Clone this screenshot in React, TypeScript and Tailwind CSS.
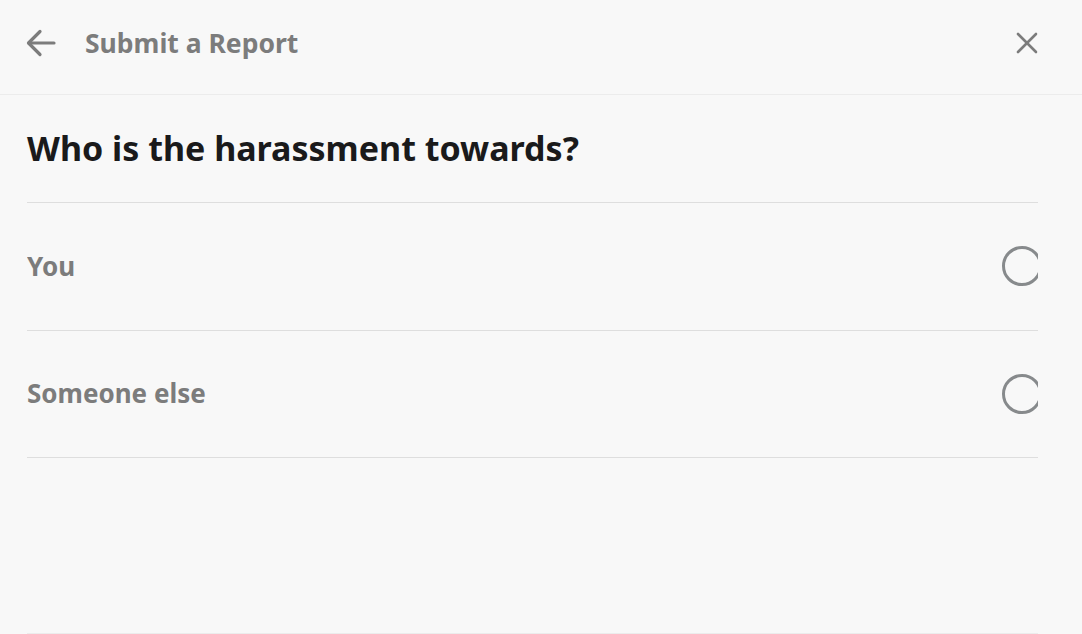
import { useState } from "react";

const OPTIONS = ["You", "Someone else"];

const App = () => {
  const [selected, setSelected] = useState<string | null>(null);

  return (
    <div className="w-[1082px] h-[634px] overflow-hidden bg-[#f8f8f8] font-['Noto_Sans',sans-serif]">
      <header className="h-[95px] pb-[8px] flex items-center justify-between pl-[26px] pr-[44px] border-b border-[#ececec]">
        <div className="flex items-center gap-[29px]">
          <button className="text-[#7c7c7c]">
            <svg width="30" height="30" viewBox="0 0 30 30" fill="none" stroke="currentColor" strokeWidth="3.2" strokeLinecap="round" strokeLinejoin="round">
              <path d="M28 15H3" />
              <path d="M14 3.5 2.5 15 14 26.5" />
            </svg>
          </button>
          <h1 className="text-[26.5px] font-bold text-[#7c7c7c] leading-none">Submit a Report</h1>
        </div>
        <button className="text-[#7c7c7c]">
          <svg width="22" height="22" viewBox="0 0 22 22" fill="none" stroke="currentColor" strokeWidth="2.6" strokeLinecap="round">
            <path d="M2 2 20 20" />
            <path d="M20 2 2 20" />
          </svg>
        </button>
      </header>

      <main className="pl-[27px] pr-[44px]">
        <h2 className="pt-[33px] pb-[34px] text-[34px] font-bold text-[#1a1a1b] leading-[40px]">
          Who is the harassment towards?
        </h2>
        <div className="border-t border-[#dedede] overflow-hidden">
          {OPTIONS.map((option) => (
            <button
              key={option}
              onClick={() => setSelected(option)}
              className="w-full h-[127.5px] flex items-center justify-between border-b border-[#dedede]"
            >
              <span className="text-[26px] font-bold text-[#7c7c7c]">{option}</span>
              <span className="mr-[-4px] w-[40px] h-[40px] rounded-full border-[3px] border-[#878a8c] flex items-center justify-center">
                {selected === option ? <span className="w-[20px] h-[20px] rounded-full bg-[#878a8c]" /> : null}
              </span>
            </button>
          ))}
        </div>
        <div className="mt-[175px] border-t border-[#ececec]" />
      </main>
    </div>
  );
};

export default App;
